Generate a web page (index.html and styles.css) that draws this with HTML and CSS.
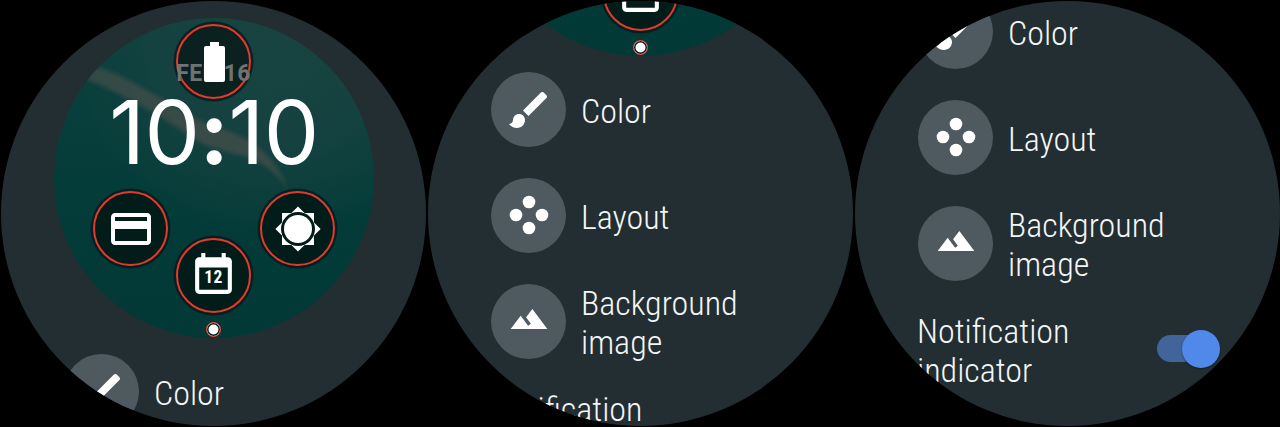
FILE: index.html
```html
<!DOCTYPE html>
<html lang="en">
<head>
    <meta charset="UTF-8">
    <meta name="viewport" content="width=device-width, initial-scale=1.0">
    <title>Watch face settings</title>
    <link rel="stylesheet" href="styles.css">
</head>
<body>
    <svg class="defs" width="0" height="0">
        <symbol id="i-battery" viewBox="0 0 21 40"><path d="M6 0h9v4h4a2 2 0 0 1 2 2v32a2 2 0 0 1-2 2H2a2 2 0 0 1-2-2V6a2 2 0 0 1 2-2h4z"/></symbol>
        <symbol id="i-card" viewBox="0 0 24 24"><path d="M20 4H4c-1.11 0-1.99.89-1.99 2L2 18c0 1.11.89 2 2 2h16c1.11 0 2-.89 2-2V6c0-1.11-.89-2-2-2zm0 14H4v-6h16v6zm0-10H4V6h16v2z"/></symbol>
        <symbol id="i-sun" viewBox="0 0 24 24"><path d="M20 8.69V4h-4.69L12 .69 8.69 4H4v4.69L.69 12 4 15.31V20h4.69L12 23.31 15.31 20H20v-4.69L23.31 12 20 8.69z"/><circle cx="12" cy="12" r="8.5" fill="#021c1a"/><circle cx="12" cy="12" r="7"/></symbol>
        <symbol id="i-calendar" viewBox="0 0 24 24"><path d="M19 4h-1V2h-2v2H8V2H6v2H5c-1.1 0-2 .9-2 2v14c0 1.1.9 2 2 2h14c1.1 0 2-.9 2-2V6c0-1.1-.9-2-2-2zm0 16H5V9h14v11z"/></symbol>
        <symbol id="i-brush" viewBox="0 0 24 24"><path d="M7 14c-1.66 0-3 1.34-3 3 0 1.31-1.16 2-2 2 .92 1.22 2.49 2 4 2 2.21 0 4-1.79 4-4 0-1.66-1.34-3-3-3zm13.71-9.37l-1.34-1.34c-.39-.39-1.02-.39-1.41 0L9 12.25 11.75 15l8.96-8.96c.39-.39.39-1.02 0-1.41z"/></symbol>
        <symbol id="i-layout" viewBox="0 0 48 48"><circle cx="24" cy="11" r="6.3"/><circle cx="11" cy="24" r="6.3"/><circle cx="37" cy="24" r="6.3"/><circle cx="24" cy="37" r="6.3"/></symbol>
        <symbol id="i-image" viewBox="0 0 24 24"><path d="M14 6l-3.75 5 2.85 3.8-1.6 1.2C9.81 13.75 7 10 7 10l-6 8h22L14 6z"/></symbol>
        <symbol id="face" viewBox="0 0 320 320">
            <filter id="soft" x="-10%" y="-10%" width="120%" height="120%"><feGaussianBlur stdDeviation="2"/></filter>
            <path d="M33 47C62 52 84 68 104 78c18 9 34 22 50 28 22 8 44 14 60 32 10 11 16 22 20 34-9-14-20-24-34-30-20-9-38-8-58-20C118 106 86 84 30 60z" fill="#8a625b" opacity=".32" filter="url(#soft)"/>
        </symbol>
    </svg>

    <div class="screens">
        <div class="watch">
            <div class="scroll">
                <div class="preview">
                    <svg class="wisp"><use href="#face"/></svg>
                    <div class="comp comp-battery"></div>
                    <div class="date">FEB 16</div>
                    <svg class="battery-icon"><use href="#i-battery"/></svg>
                    <div class="time">10<span class="colon">:</span>10</div>
                    <div class="comp comp-card"><svg class="comp-icon"><use href="#i-card"/></svg></div>
                    <div class="comp comp-sun"><svg class="comp-icon"><use href="#i-sun"/></svg></div>
                    <div class="comp comp-calendar"><svg class="comp-icon"><use href="#i-calendar"/></svg><span class="day">12</span></div>
                    <div class="dot"></div>
                </div>
                <div class="list">
                    <div class="row"><div class="round"><svg class="icon"><use href="#i-brush"/></svg></div><div class="label">Color</div></div>
                </div>
            </div>
        </div>

        <div class="watch">
            <div class="scroll scroll-mid">
                <div class="preview">
                    <div class="comp comp-calendar"><svg class="comp-icon"><use href="#i-calendar"/></svg><span class="day">12</span></div>
                    <div class="dot"></div>
                </div>
                <div class="list">
                    <div class="row"><div class="round"><svg class="icon"><use href="#i-brush"/></svg></div><div class="label">Color</div></div>
                    <div class="row"><div class="round"><svg class="icon"><use href="#i-layout"/></svg></div><div class="label">Layout</div></div>
                    <div class="row"><div class="round"><svg class="icon icon-image"><use href="#i-image"/></svg></div><div class="label">Background<br>image</div></div>
                    <div class="row"><div class="label label-wide">Notification<br>indicator</div><div class="toggle"><div class="thumb"></div></div></div>
                </div>
            </div>
        </div>

        <div class="watch">
            <div class="scroll scroll-end">
                <div class="preview"></div>
                <div class="list">
                    <div class="row"><div class="round"><svg class="icon"><use href="#i-brush"/></svg></div><div class="label">Color</div></div>
                    <div class="row"><div class="round"><svg class="icon"><use href="#i-layout"/></svg></div><div class="label">Layout</div></div>
                    <div class="row"><div class="round"><svg class="icon icon-image"><use href="#i-image"/></svg></div><div class="label">Background<br>image</div></div>
                    <div class="row"><div class="label label-wide">Notification<br>indicator</div><div class="toggle"><div class="thumb"></div></div></div>
                </div>
            </div>
        </div>
    </div>
</body>
</html>
```

FILE: styles.css
```css
html, body { margin: 0; height: 100%; background: #000; overflow: hidden; }
body { font-family: Roboto, "Liberation Sans", sans-serif; color: #fff; }
.defs { display: block; height: 0; }

.screens { display: flex; gap: 2px; padding: 1px; }
.watch {
    width: 425px;
    height: 425px;
    flex: none;
    border-radius: 50%;
    overflow: hidden;
    background: #232e33;
}
.scroll { padding-top: 17px; }
.scroll-mid { margin-top: -282px; }
.scroll-end { margin-top: -360px; }

.preview {
    position: relative;
    width: 320px;
    height: 320px;
    margin: 0 auto;
    border-radius: 50%;
    overflow: hidden;
    background:
        radial-gradient(circle at 68% 6%, #184340 0, #154240 28%, rgba(21, 66, 64, 0) 54%),
        linear-gradient(#0a403d 0%, #073e3b 35%, #033b38 62%, #023937 100%);
}
.wisp { position: absolute; left: 0; top: 0; width: 320px; height: 320px; }

.comp {
    position: absolute;
    width: 75px;
    height: 75px;
    box-sizing: border-box;
    display: flex;
    align-items: center;
    justify-content: center;
    border: 2px solid #e53a2b;
    border-radius: 50%;
    background: #021c1a;
    box-shadow: 0 0 0 2.5px rgba(3, 24, 24, .75);
}
.comp-battery { left: 122.5px; top: 6px; background: #0b211f; }
.comp-card { left: 39.5px; top: 173px; }
.comp-sun { left: 206.5px; top: 173px; }
.comp-calendar { left: 122.5px; top: 219.5px; }
.comp-icon { width: 48px; height: 48px; fill: #fff; }
.comp-calendar .comp-icon { width: 49px; height: 49px; margin-top: -3px; }
.day {
    position: absolute;
    left: 0;
    right: 0;
    top: 27px;
    text-align: center;
    font-size: 17.5px;
    line-height: 20px;
    font-weight: 700;
    font-stretch: 75%;
    letter-spacing: .5px;
}

.date {
    position: absolute;
    left: 0;
    right: 0;
    top: 42px;
    text-align: center;
    font-size: 23px;
    line-height: 28px;
    font-weight: 700;
    letter-spacing: .4px;
    color: #6f7374;
}
.battery-icon { position: absolute; left: 150px; top: 23.5px; width: 21px; height: 40px; fill: #fff; }
.time {
    position: absolute;
    left: 1px;
    right: 0;
    top: 69px;
    text-align: center;
    font-family: Inter, Roboto, sans-serif;
    font-size: 88px;
    line-height: 90px;
    font-weight: 440;
    letter-spacing: -.5px;
}
.colon { font-weight: 700; }
.dot {
    position: absolute;
    left: 152.5px;
    top: 303.5px;
    width: 15px;
    height: 15px;
    box-sizing: border-box;
    border: 1.5px solid #e53a2b;
    border-radius: 50%;
    background: #fff;
    box-shadow: inset 0 0 0 1.5px #021c1a;
}

.list { margin-top: 16px; padding: 0 59px 0 63px; }
.row { display: flex; align-items: center; height: 75px; margin-bottom: 30.8px; }
.round {
    width: 75px;
    height: 75px;
    flex: none;
    display: flex;
    align-items: center;
    justify-content: center;
    margin-right: 15px;
    border-radius: 50%;
    background: #4f5a60;
}
.icon { width: 48px; height: 48px; fill: #fff; }
.icon-image { width: 40px; height: 40px; margin-top: -4px; }
.label {
    margin-top: 4px;
    font-size: 34px;
    line-height: 39px;
    font-weight: 300;
    font-stretch: 75%;
    white-space: nowrap;
    color: #f4f6f6;
}
.label-wide { margin-left: -1px; }

.toggle {
    position: relative;
    width: 46px;
    height: 27px;
    margin-left: auto;
    margin-right: 18px;
    border-radius: 14px;
    background: #41649a;
}
.thumb {
    position: absolute;
    right: -17px;
    top: -5.5px;
    width: 38px;
    height: 38px;
    border-radius: 50%;
    background: #5089ea;
    box-shadow: 0 1px 2px rgba(0, 0, 0, .4);
}
```
